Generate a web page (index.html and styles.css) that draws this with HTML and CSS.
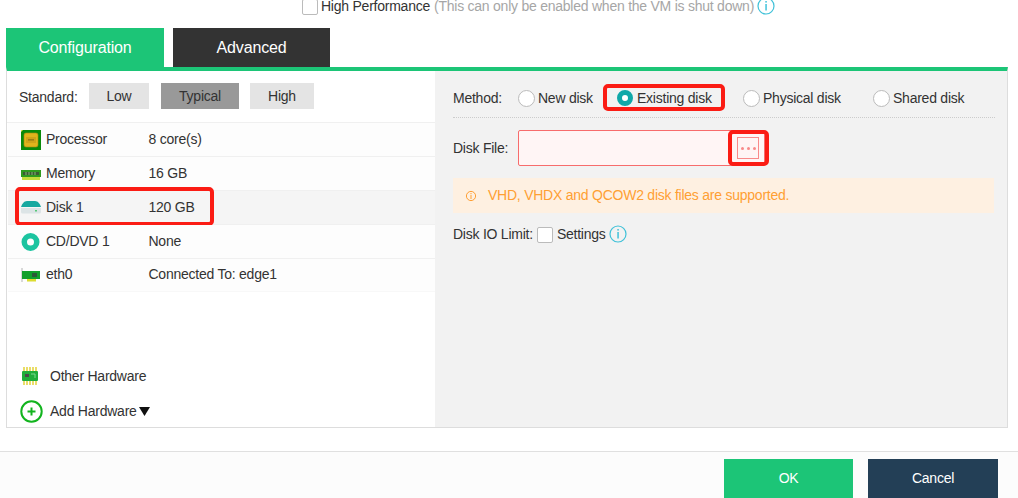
FILE: index.html
```html
<!DOCTYPE html>
<html lang="en">
<head>
<meta charset="utf-8">
<title>Disk configuration</title>
<link rel="stylesheet" href="styles.css">
</head>
<body>
<div class="top-row">
  <span class="check"></span>
  <span class="top-label">High Performance</span>
  <span class="muted">(This can only be enabled when the VM is shut down)</span>
  <svg class="info-top" width="18" height="18" viewBox="0 0 18 18"><circle cx="9" cy="9" r="8" fill="none" stroke="#3fc1d8" stroke-width="1.2"/><rect x="8.4" y="4" width="1.3" height="1.6" fill="#25b9d6"/><rect x="8.4" y="7" width="1.3" height="6.5" fill="#25b9d6"/></svg>
</div>
<div class="tabs">
  <div class="tab tab-on">Configuration</div>
  <div class="tab tab-off">Advanced</div>
</div>
<div class="panel">
  <div class="left">
    <div class="standard">
      <span class="std-label">Standard:</span>
      <span class="std-btn btn-low">Low</span>
      <span class="std-btn btn-typ">Typical</span>
      <span class="std-btn btn-high">High</span>
    </div>
    <div class="rows">
      <div class="row">
        <svg class="ico" width="20" height="20" viewBox="0 0 20 20"><rect width="20" height="20" fill="#0a8a0a"/><path d="M0 0h2L0 2z" fill="#e8e050"/><rect x="3" y="3" width="14" height="14" rx="2" fill="#e0b41c" stroke="#a88a10" stroke-width=".6"/><rect x="5" y="7" width="10" height="6" fill="#cfa418"/><rect x="7" y="9" width="6" height="1.6" fill="#9b7d14"/></svg>
        <span class="name">Processor</span><span class="val">8 core(s)</span>
      </div>
      <div class="row">
        <svg class="ico" width="20" height="20" viewBox="0 0 20 20"><rect y="6" width="20" height="7" fill="#2f9a1e"/><rect x="2" y="8" width="16" height="3" fill="#3c5a34"/><path d="M5 8v3M8 8v3M11 8v3M14 8v3" stroke="#9acb8a" stroke-width=".8"/><rect x="1" y="13" width="18" height="3" fill="#c4dc3c"/></svg>
        <span class="name">Memory</span><span class="val">16 GB</span>
      </div>
      <div class="row row-sel">
        <svg class="ico" width="20" height="20" viewBox="0 0 20 20"><path d="M0 9C1 6 3 3 6 3h8c3 0 5 3 6 6z" fill="#16a8a0"/><path d="M0 10h20v4a1.500 1.500 0 0 1-1.500 1.500h-17A1.500 1.500 0 0 1 0 14z" fill="#dce4e6"/><rect x="14" y="12" width="2" height="1.500" fill="#58c878"/></svg>
        <span class="name">Disk 1</span><span class="val">120 GB</span>
        <span class="mark mark-disk"></span>
      </div>
      <div class="row">
        <svg class="ico" width="20" height="20" viewBox="0 0 20 20"><circle cx="9.500" cy="10" r="6.250" fill="none" stroke="#1cc4a0" stroke-width="5.500"/></svg>
        <span class="name">CD/DVD 1</span><span class="val">None</span>
      </div>
      <div class="row row-last">
        <svg class="ico" width="20" height="20" viewBox="0 0 20 20"><rect y="3" width="2" height="14" fill="#d8d8d8"/><rect x="1" y="6" width="18" height="8" fill="#12a02c"/><rect x="11" y="8" width="5" height="4" fill="#2c5a38"/><rect x="6" y="14" width="9" height="2.500" fill="#dcdc30"/></svg>
        <span class="name">eth0</span><span class="val">Connected To: edge1</span>
      </div>
    </div>
    <div class="spacer"></div>
    <div class="extra extra-other">
      <svg class="ico-other" width="16" height="18" viewBox="0 0 16 18"><path d="M2 0v18M5 0v18M8 0v18M11 0v18M14 0v18" stroke="#e2cf2a" stroke-width="1.400"/><rect y="4" width="16" height="10" rx="1" fill="#1fae3a"/><rect x="3" y="7" width="4" height="3" fill="#4a4a4a"/><path d="M9 7h4v4" stroke="#7fd68f" fill="none"/></svg>
      <span>Other Hardware</span>
    </div>
    <div class="extra extra-add">
      <svg class="ico-add" width="23" height="23" viewBox="0 0 23 23"><circle cx="11.500" cy="11.500" r="10.200" fill="#fff" stroke="#12b41e" stroke-width="2"/><path d="M11.500 7.500v8M7.500 11.500h8" stroke="#12b41e" stroke-width="2"/></svg>
      <span class="add-label">Add Hardware</span><svg class="caret" width="11" height="9" viewBox="0 0 11 9"><path d="M0 0h11L5.500 9z" fill="#111"/></svg>
    </div>
  </div>
  <div class="right">
    <div class="method">
      <span class="lbl">Method:</span>
      <span class="opt opt-new"><span class="radio"></span>New disk</span>
      <span class="opt opt-existing"><span class="radio radio-on"></span>Existing disk<span class="mark mark-existing"></span></span>
      <span class="opt opt-physical"><span class="radio"></span>Physical disk</span>
      <span class="opt"><span class="radio"></span>Shared disk</span>
    </div>
    <div class="file">
      <span class="lbl lbl-file">Disk File:</span>
      <div class="input">
        <span class="browse"><i></i><i></i><i></i></span>
        <span class="mark mark-browse"></span>
      </div>
    </div>
    <div class="alert">
      <svg class="alert-ico" width="12" height="12" viewBox="0 0 12 12"><circle cx="6" cy="6" r="4.600" fill="none" stroke="#ff9f33" stroke-width="1"/><rect x="5.500" y="3" width="1" height="1.200" fill="#ff9f33"/><rect x="5.500" y="5" width="1" height="4" fill="#ff9f33"/></svg>
      <span class="alert-text">VHD, VHDX and QCOW2 disk files are supported.</span>
    </div>
    <div class="limit">
      <span>Disk IO Limit:</span>
      <span class="check check-limit"></span>
      <span>Settings</span>
      <svg class="info-limit" width="18" height="18" viewBox="0 0 18 18"><circle cx="9" cy="9" r="8" fill="none" stroke="#3fc1d8" stroke-width="1.200"/><rect x="8.400" y="4" width="1.300" height="1.600" fill="#25b9d6"/><rect x="8.400" y="7" width="1.300" height="6.500" fill="#25b9d6"/></svg>
    </div>
  </div>
</div>
<div class="footer">
  <span class="foot-btn foot-ok">OK</span>
  <span class="foot-btn foot-cancel">Cancel</span>
</div>
</body>
</html>
```
FILE: styles.css
```css
* { box-sizing: border-box; }
html, body { margin: 0; padding: 0; }
body {
  width: 1018px;
  height: 498px;
  overflow: hidden;
  background: #fff;
  color: #333;
  font: 14px/16px "Liberation Sans", Arial, sans-serif;
  letter-spacing: -0.24px;
}
.top-row {
  height: 14px;
  margin-top: -1px;
  margin-bottom: 15px;
  padding-left: 302px;
  display: flex;
  align-items: flex-start;
}
.check {
  width: 16px;
  height: 16px;
  flex: none;
  background: #fff;
  border: 1px solid #bbb;
  border-radius: 2px;
}
.top-label { margin-left: 3px; margin-top: -1px; }
.muted { margin-left: 4px; margin-top: -1px; color: #a6a6a6; }
.info-top { margin-left: 3px; margin-top: -2px; flex: none; }
.tabs { display: flex; padding-left: 6px; height: 39px; }
.tab {
  width: 158px;
  height: 39px;
  color: #fff;
  font-size: 16px;
  letter-spacing: -0.15px;
  line-height: 39px;
  text-align: center;
}
.tab-on { background: #1cc577; }
.tab-off { width: 157px; margin-left: 9px; background: #333; }
.panel {
  display: flex;
  width: 1002px;
  height: 361px;
  margin-left: 6px;
  border-top: 4px solid #1cc577;
  border-left: 1px solid #ddd;
  border-right: 1px solid #ddd;
  border-bottom: 1px solid #ddd;
}
.left {
  width: 428px;
  flex: none;
  display: flex;
  flex-direction: column;
  background: #fff;
}
.standard {
  height: 52px;
  display: flex;
  align-items: center;
  padding-left: 12px;
  padding-bottom: 2px;
  border-bottom: 1px solid #f0f0f0;
}
.std-label { width: 70px; flex: none; margin-top: 2px; }
.std-btn {
  height: 26px;
  line-height: 26px;
  text-align: center;
  background: #e4e4e4;
}
.btn-low { width: 60px; }
.btn-typ { width: 78px; margin-left: 12px; background: #999; }
.btn-high { width: 64px; margin-left: 11px; }
.rows { display: flex; flex-direction: column; }
.row {
  position: relative;
  height: 34px;
  display: flex;
  align-items: center;
  padding-left: 13px;
  margin-left: 1px;
  background: #fdfdfd;
  border-bottom: 1px solid #f0f0f0;
}
.row-sel { background: #f5f5f5; }
.row-last { height: 33px; border-bottom-color: #f8f8f8; }
.ico { flex: none; }
.name { width: 102.5px; margin-left: 5px; margin-bottom: 2px; flex: none; }
.val { margin-bottom: 2px; }
.spacer { flex: 1; }
.extra {
  display: flex;
  align-items: center;
  padding-left: 15px;
}
.extra-other { height: 34px; margin-bottom: 0; padding-top: 2px; }
.extra-add { height: 35px; padding-left: 13px; padding-top: 4px; }
.add-label { margin-bottom: 2px; }
.ico-other { margin-right: 12px; flex: none; }
.ico-add { margin-right: 7px; flex: none; }
.caret { margin-left: 2px; flex: none; }
.right {
  flex: 1;
  background: #f2f2f2;
  padding: 0 12px 0 18px;
}
.method {
  height: 47px;
  padding-top: 8px;
  display: flex;
  align-items: center;
  border-bottom: 1px dotted #ccc;
}
.lbl { flex: none; }
.method .lbl { width: 65px; }
.opt { position: relative; display: flex; align-items: center; flex: none; }
.opt-new { width: 99px; }
.opt-existing { width: 126px; }
.opt-physical { width: 130px; }
.radio {
  width: 17px;
  height: 17px;
  margin-right: 3px;
  flex: none;
  background: #fff;
  border: 1px solid #bbb;
  border-radius: 50%;
}
.radio-on { width: 16px; height: 16px; margin-right: 4px; border: 5px solid #10a8a8; }
.file {
  display: flex;
  align-items: center;
  margin-top: 12px;
}
.lbl-file { width: 65px; }
.input {
  position: relative;
  width: 247px;
  height: 36px;
  display: flex;
  align-items: center;
  justify-content: flex-end;
  padding-right: 5px;
  background: #fff5f5;
  border: 1px solid #f76c6c;
  border-radius: 2px;
}
.browse {
  width: 22px;
  height: 22px;
  display: flex;
  align-items: center;
  justify-content: center;
  gap: 3px;
  background: #fff5f5;
  border: 1px solid #f98a8a;
}
.browse i {
  width: 3px;
  height: 3px;
  border-radius: 50%;
  background: #f88a8a;
}
.alert {
  width: 541px;
  height: 35px;
  margin-top: 12px;
  padding-left: 12px;
  display: flex;
  align-items: center;
  color: #ff9f33;
  background: #fef0e1;
}
.alert-ico { margin-right: 11px; flex: none; }
.alert-text { margin-bottom: 2px; }
.limit {
  display: flex;
  align-items: center;
  margin-top: 12px;
  height: 18px;
}
.check-limit { margin-left: 4px; margin-right: 4px; margin-top: 2px; }
.info-limit { margin-left: 3px; flex: none; }
.footer {
  height: 47px;
  margin-top: 23px;
  padding: 7px 20px 0 0;
  display: flex;
  justify-content: flex-end;
  background: #fcfcfc;
  border-top: 1px solid #e0e0e0;
}
.foot-btn {
  height: 39px;
  line-height: 39px;
  text-align: center;
  color: #fff;
}
.foot-ok { width: 129px; background: #1cc577; }
.foot-cancel { width: 130px; margin-left: 15px; background: #233f56; }
.mark {
  position: absolute;
  border: 4px solid #fb1c14;
  border-radius: 5px;
  pointer-events: none;
}
.mark-disk { left: 7px; top: -4px; width: 199px; height: 39px; }
.mark-existing { left: -14px; top: -6px; width: 122px; height: 27px; }
.mark-browse { right: -5px; top: -1px; width: 41px; height: 36px; }
```
